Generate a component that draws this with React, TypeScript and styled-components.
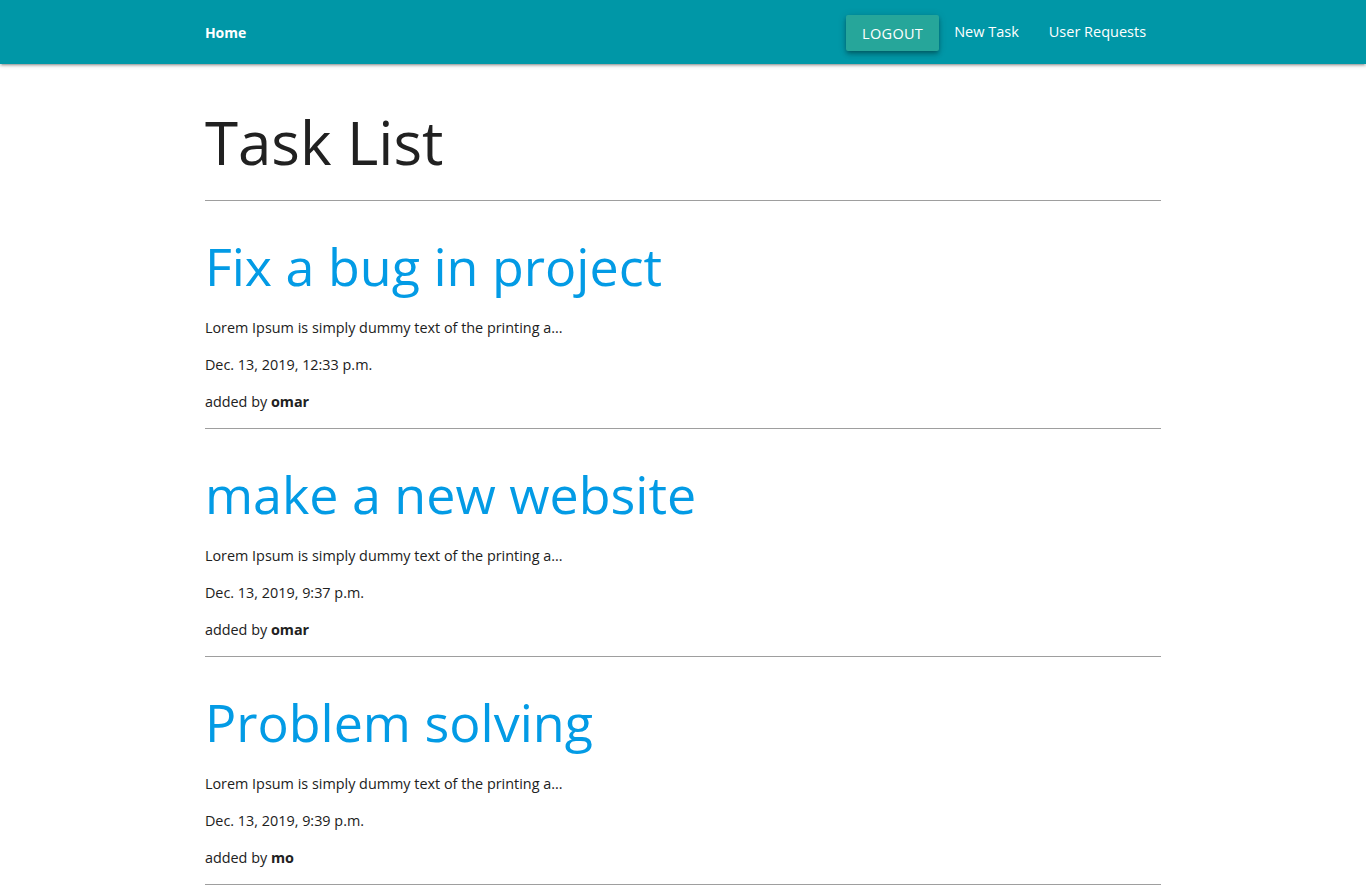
import styled, { createGlobalStyle } from "styled-components";

const GlobalStyle = createGlobalStyle`
  html, body {
    margin: 0;
    padding: 0;
    background: #ffffff;
    font-family: "Open Sans", "Noto Sans", sans-serif;
    color: #212121;
  }
`;

const Nav = styled.nav`
  height: 64px;
  background-color: #0097a7;
  box-shadow: 0 2px 2px 0 rgba(0, 0, 0, 0.14), 0 3px 1px -2px rgba(0, 0, 0, 0.12),
    0 1px 5px 0 rgba(0, 0, 0, 0.2);
`;

const Container = styled.div`
  width: 70%;
  margin: 0 auto;
`;

const NavInner = styled(Container)`
  display: flex;
  align-items: center;
  justify-content: space-between;
  height: 64px;
`;

const Brand = styled.a`
  color: #ffffff;
  font-size: 14px;
  font-weight: 700;
  text-decoration: none;
`;

const NavLinks = styled.ul`
  display: flex;
  align-items: center;
  list-style: none;
  margin: 0;
  padding: 0;
`;

const NavLink = styled.a`
  display: block;
  padding: 0 15px;
  color: #ffffff;
  font-size: 14.5px;
  text-decoration: none;
  line-height: 64px;
`;

const LogoutButton = styled.button`
  display: block;
  height: 36px;
  margin-top: 2px;
  padding: 0 16px;
  border: none;
  border-radius: 2px;
  background-color: #26a69a;
  color: #ffffff;
  font-family: inherit;
  font-size: 14.5px;
  letter-spacing: 0.3px;
  text-transform: uppercase;
  box-shadow: 0 4px 5px 0 rgba(0, 0, 0, 0.14), 0 1px 10px 0 rgba(0, 0, 0, 0.12),
    0 2px 4px -1px rgba(0, 0, 0, 0.3);
  cursor: pointer;
`;

const PageTitle = styled.h1`
  margin: 36px 0 16px;
  font-size: 60px;
  font-weight: 400;
  line-height: 84px;
  color: #212121;
`;

const Rule = styled.hr`
  margin: 0;
  border: none;
  border-top: 1px solid #9e9e9e;
`;

const Task = styled.article`
  padding-top: 33px;
`;

const TaskTitle = styled.a`
  display: block;
  font-size: 52px;
  line-height: 64px;
  color: #039be5;
  text-decoration: none;
  margin-bottom: 11px;
`;

const Line = styled.p`
  margin: 0;
  font-size: 14.4px;
  line-height: 37px;
`;

const LastLine = styled(Line)`
  margin-bottom: 8px;
`;

const tasks = [
  { title: "Fix a bug in project", date: "Dec. 13, 2019, 12:33 p.m.", user: "omar" },
  { title: "make a new website", date: "Dec. 13, 2019, 9:37 p.m.", user: "omar" },
  { title: "Problem solving", date: "Dec. 13, 2019, 9:39 p.m.", user: "mo" },
];

const App = () => {
  return (
    <>
      <GlobalStyle />
      <Nav>
        <NavInner>
          <Brand href="#">Home</Brand>
          <NavLinks>
            <li>
              <LogoutButton>Logout</LogoutButton>
            </li>
            <li>
              <NavLink href="#">New Task</NavLink>
            </li>
            <li>
              <NavLink href="#">User Requests</NavLink>
            </li>
          </NavLinks>
        </NavInner>
      </Nav>
      <Container>
        <PageTitle>Task List</PageTitle>
        <Rule />
        {tasks.map((t) => (
          <Task key={t.title}>
            <TaskTitle href="#">{t.title}</TaskTitle>
            <Line>Lorem Ipsum is simply dummy text of the printing a...</Line>
            <Line>{t.date}</Line>
            <LastLine>
              added by <b>{t.user}</b>
            </LastLine>
            <Rule />
          </Task>
        ))}
      </Container>
    </>
  );
};

export default App;
